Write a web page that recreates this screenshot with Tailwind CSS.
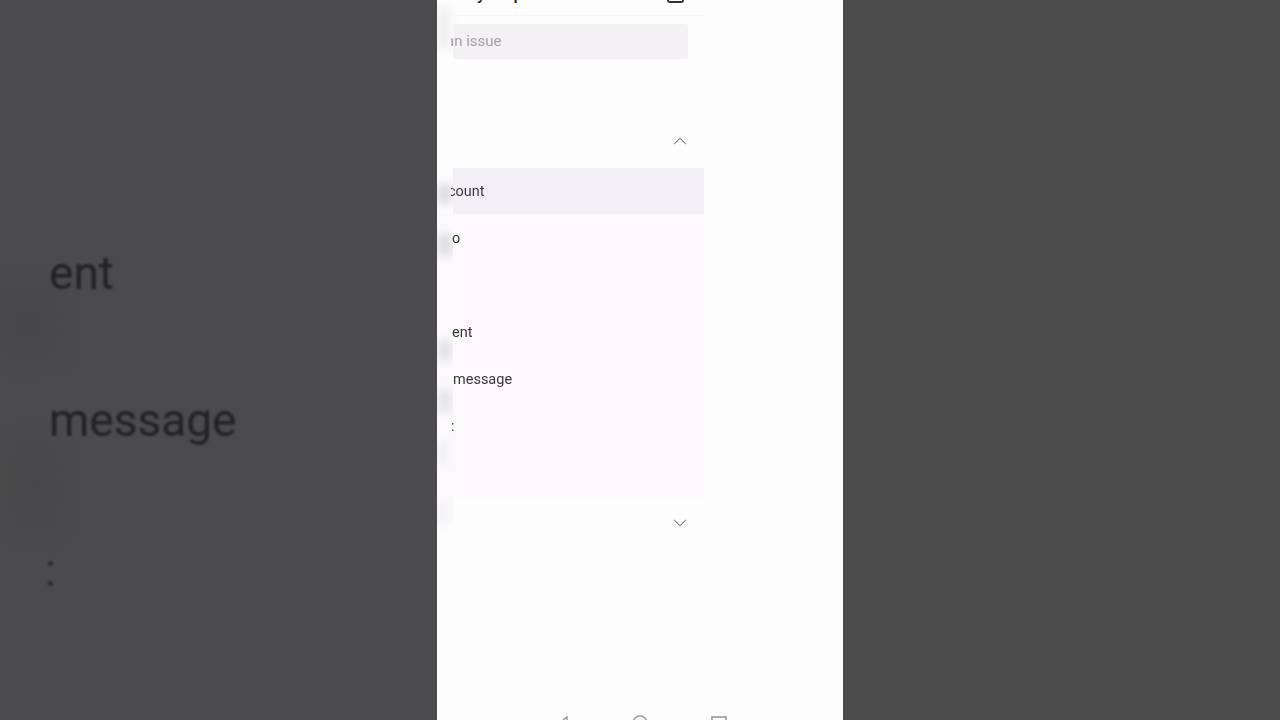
<!DOCTYPE html>
<html><head><meta charset="utf-8"><script src="https://cdn.jsdelivr.net/npm/@tailwindcss/browser@4"></script></head>
<body class="overflow-hidden">
<div class="flex h-[720px] w-[1280px] font-['Roboto',sans-serif]">
  <div class="relative w-[437px] overflow-hidden bg-[#4b4a4c]">
    <div class="absolute left-0 top-[298px] h-[50px] w-[50px] bg-[#474648] blur-md"></div>
    <div class="absolute left-[20px] top-[450px] h-[70px] w-[30px] bg-[#474648] blur-md"></div>
    <div class="flex flex-col pl-[49px] text-[46px] leading-[50px] text-[#232224] blur-[1px]">
      <div class="mt-[248px]">ent</div>
      <div class="mt-[97px]">message</div>
      <div class="mt-[100px] ml-[-4px] text-[46px] text-[#2c2b2d]">:</div>
    </div>
  </div>

  <div class="relative flex w-[406px] flex-col overflow-hidden bg-[#fefdfe]">
    <div class="absolute left-0 top-[214px] h-[310px] w-[16px] bg-[#fcf9fc]"></div>
    <div class="absolute left-0 top-[8px] h-[42px] w-[14px] bg-[#f0eff0] blur-[4px]"></div>
    <div class="absolute left-0 top-[184px] h-[20px] w-[16px] bg-[#dedddf] blur-[4px]"></div>
    <div class="absolute left-0 top-[234px] h-[22px] w-[16px] bg-[#e0dfe1] blur-[4px]"></div>
    <div class="absolute left-0 top-[340px] h-[20px] w-[16px] bg-[#e4e3e5] blur-[4px]"></div>
    <div class="absolute left-0 top-[390px] h-[22px] w-[16px] bg-[#e6e5e7] blur-[4px]"></div>
    <div class="absolute left-0 top-[442px] h-[22px] w-[12px] bg-[#f0eff1] blur-[4px]"></div>
    <div class="absolute left-0 top-[502px] h-[24px] w-[10px] bg-[#f3f2f4] blur-[4px]"></div>

    <div class="relative ml-[14px] flex h-[720px] flex-col overflow-hidden pl-[2px]">
      <div class="flex h-[16px] w-[251px] items-end justify-between border-b border-[#f7f5f7] pr-[20px]">
        <span class="mb-[11px] pl-[24px] text-[17px] font-medium leading-[20px] text-[#222] tracking-[12px]">y p</span>
        <div class="mb-[12px] h-[6px] w-[17px] rounded-b-[3px] border-2 border-t-0 border-[#333]"></div>
      </div>
      <div class="mt-[8px] flex h-[35px] w-[235px] items-center rounded-[3px] bg-[#f4f1f5] blur-[0.3px]">
        <span class="ml-[-7px] text-[15px] text-[#a4a1a6]">an issue</span>
      </div>
      <div class="flex h-[109px] w-[235px] items-end justify-end pb-[23px] pr-[1px]">
        <svg class="h-[8px] w-[14px]" viewBox="0 0 14 8" fill="none" stroke="#8b8a8d" stroke-width="1.2"><path d="M1 7.2 7 1.2l6 6"/></svg>
      </div>
      <div class="w-[251px] bg-[#fcf8fc] text-[14.5px] text-[#3a393d]">
        <div class="flex h-[46px] items-center bg-[#f3f0f5] pt-[2px]"><span class="ml-[-5px] blur-[0.3px]">count</span></div>
        <div class="flex h-[47px] items-center pt-[2px]"><span class="ml-[-1px] blur-[0.3px]">o</span></div>
        <div class="h-[47px]"></div>
        <div class="flex h-[47px] items-center pt-[2px]"><span class="ml-[-1px] blur-[0.3px]">ent</span></div>
        <div class="flex h-[47px] items-center pt-[2px]"><span class="blur-[0.3px]">message</span></div>
        <div class="flex h-[47px] items-center pt-[2px]"><span class="ml-[-2px] blur-[0.3px]">:</span></div>
        <div class="h-[48px]"></div>
      </div>
      <div class="flex h-[30px] w-[235px] items-end justify-end pr-[1px]">
        <svg class="h-[8px] w-[14px]" viewBox="0 0 14 8" fill="none" stroke="#8b8a8d" stroke-width="1.2"><path d="M1 .8l6 6 6-6"/></svg>
      </div>
    </div>
    <div class="absolute bottom-[-11px] left-[120px] flex w-[170px] items-center justify-between">
      <svg class="h-[14px] w-[12px]" viewBox="0 0 12 14" fill="none" stroke="#98979a" stroke-width="1.4"><path d="M10 1 2 7l8 6z"/></svg>
      <svg class="h-[16px] w-[16px]" viewBox="0 0 16 16" fill="none" stroke="#98979a" stroke-width="1.4"><circle cx="8" cy="8" r="7"/></svg>
      <svg class="h-[14px] w-[16px]" viewBox="0 0 16 14" fill="none" stroke="#98979a" stroke-width="1.6"><rect x="1" y="1" width="14" height="12"/></svg>
    </div>
  </div>

  <div class="w-[437px] bg-[#4b4b4b]"></div>
</div>
</body></html>
